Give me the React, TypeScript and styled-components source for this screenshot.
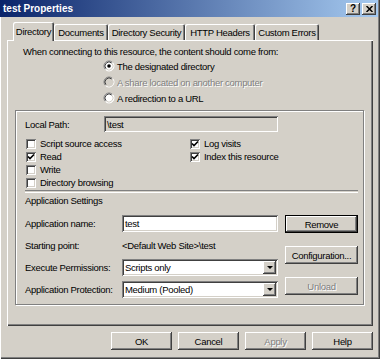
import { Fragment } from "react";
import styled, { createGlobalStyle } from "styled-components";

const GlobalStyle = createGlobalStyle`
  html, body {
    margin: 0;
    padding: 0;
    background: #d4d0c8;
  }
  body {
    font-family: "Liberation Sans", Arial, sans-serif;
    font-size: 9.5px;
    letter-spacing: -0.3px;
    color: #000;
  }
`;

const raised = `
  box-shadow: inset -1px -1px #404040, inset 1px 1px #ffffff,
    inset -2px -2px #808080, inset 2px 2px #d4d0c8;
`;

const sunken = `
  box-shadow: inset 1px 1px #808080, inset -1px -1px #ffffff,
    inset 2px 2px #404040, inset -2px -2px #d4d0c8;
`;

const Window = styled.div`
  width: 380px;
  height: 359px;
  box-sizing: border-box;
  background: #d4d0c8;
  display: flex;
  flex-direction: column;
  overflow: hidden;
  box-shadow: inset 1px 0 #ffffff, inset -1px -1px #404040, inset -2px -2px #808080;
`;

const TitleBar = styled.div`
  height: 17px;
  margin-right: 2px;
  padding: 0 2px 0 3px;
  background: linear-gradient(to right, #0a246a, #a6caf0);
  display: flex;
  align-items: center;
  justify-content: space-between;
`;

const Title = styled.span`
  color: #fff;
  font-weight: bold;
  font-size: 10px;
  letter-spacing: 0;
`;

const CaptionButtons = styled.div`
  display: flex;
  gap: 2px;
`;

const CaptionButton = styled.div`
  width: 14px;
  height: 12px;
  background: #d4d0c8;
  ${raised}
  display: flex;
  align-items: center;
  justify-content: center;
  font-weight: bold;
  font-size: 10px;
  letter-spacing: 0;
  line-height: 12px;
`;

const Body = styled.div`
  flex: 1;
  display: flex;
  flex-direction: column;
  padding: 5px 7px 0 7px;
`;

const TabStrip = styled.div`
  display: flex;
  align-items: flex-end;
  height: 18px;
  padding-left: 6px;
  position: relative;
  z-index: 1;
`;

const Tab = styled.div<{ $w: number; $active?: boolean }>`
  width: ${(p) => p.$w}px;
  height: ${(p) => (p.$active ? 19 : 16)}px;
  margin-bottom: ${(p) => (p.$active ? -1 : 0)}px;
  box-sizing: border-box;
  background: #d4d0c8;
  border-radius: 2px 2px 0 0;
  box-shadow: inset 1px 1px #ffffff, inset -1px 0 #404040, inset -2px 0 #808080;
  display: flex;
  align-items: center;
  justify-content: center;
  padding-top: ${(p) => (p.$active ? 0 : 1)}px;
  white-space: nowrap;
`;

const Panel = styled.div`
  height: 286px;
  box-sizing: border-box;
  padding: 6px 8px 0 8px;
  display: flex;
  flex-direction: column;
  box-shadow: inset 1px 1px #ffffff, inset -1px -1px #404040, inset -2px -2px #808080;
`;

const Intro = styled.div`
  margin-left: 8px;
  line-height: 12px;
  height: 12px;
  white-space: nowrap;
`;

const RadioList = styled.div`
  margin-left: 88px;
  display: flex;
  flex-direction: column;
`;

const RadioRow = styled.div<{ $disabled?: boolean }>`
  height: 16px;
  display: flex;
  align-items: center;
  gap: 2px;
  color: ${(p) => (p.$disabled ? "#808080" : "#000")};
  text-shadow: ${(p) => (p.$disabled ? "1px 1px #ffffff" : "none")};
`;

const GroupBox = styled.div`
  margin-top: 4px;
  width: 349px;
  box-sizing: border-box;
  border: 1px solid #808080;
  box-shadow: inset 1px 1px #ffffff, 1px 1px #ffffff;
  padding: 5px 5px 6px 9px;
  display: flex;
  flex-direction: column;
`;

const PathRow = styled.div`
  display: flex;
  align-items: center;
  height: 16px;
`;

const Label = styled.span<{ $w: number }>`
  width: ${(p) => p.$w}px;
  flex-shrink: 0;
  white-space: nowrap;
`;

const Field = styled.div<{ $w: number; $h: number; $disabled?: boolean }>`
  width: ${(p) => p.$w}px;
  height: ${(p) => p.$h}px;
  box-sizing: border-box;
  background: ${(p) => (p.$disabled ? "#d4d0c8" : "#ffffff")};
  ${sunken}
  display: flex;
  align-items: center;
  padding: 0 2px 0 3px;
  white-space: nowrap;
`;

const FieldText = styled.span`
  flex: 1;
`;

const ComboArrow = styled.div`
  width: 13px;
  height: 13px;
  background: #d4d0c8;
  ${raised}
  display: flex;
  align-items: center;
  justify-content: center;

  &::after {
    content: "";
    border-left: 3px solid transparent;
    border-right: 3px solid transparent;
    border-top: 3px solid #000;
    margin-top: 1px;
  }
`;

const CheckGrid = styled.div`
  margin-top: 5px;
  margin-left: 1px;
  display: grid;
  grid-template-columns: 164px 1fr;
  grid-auto-rows: 13px;
`;

const CheckItem = styled.div`
  display: flex;
  align-items: center;
  gap: 4px;
  white-space: nowrap;
`;

const CheckBox = styled.span`
  width: 10px;
  height: 10px;
  box-sizing: border-box;
  background: #ffffff;
  ${sunken}
  display: flex;
  align-items: center;
  justify-content: center;
`;

const Separator = styled.div`
  margin-top: 1px;
  height: 1px;
  border-top: 1px solid #808080;
  border-bottom: 1px solid #ffffff;
`;

const SectionTitle = styled.div`
  margin-top: 2px;
  line-height: 12px;
  height: 12px;
`;

const Lower = styled.div`
  margin-top: 7px;
  display: flex;
`;

const SettingsGrid = styled.div`
  display: grid;
  grid-template-columns: 97px 156px;
  grid-auto-rows: 18px;
  row-gap: 4px;
  align-items: center;
`;

const SideButtons = styled.div`
  margin-left: 7px;
  margin-top: 1px;
  display: flex;
  flex-direction: column;
  gap: 13px;
`;

const Button = styled.div<{ $w: number; $disabled?: boolean; $default?: boolean }>`
  width: ${(p) => p.$w}px;
  height: 18px;
  box-sizing: border-box;
  background: #d4d0c8;
  ${(p) =>
    p.$default
      ? `box-shadow: inset 0 0 0 1px #000000, inset -2px -2px #404040, inset 2px 2px #ffffff,
          inset -3px -3px #808080, inset 3px 3px #d4d0c8;`
      : raised}
  display: flex;
  align-items: center;
  justify-content: center;
  color: ${(p) => (p.$disabled ? "#808080" : "#000")};
  text-shadow: ${(p) => (p.$disabled ? "1px 1px #ffffff" : "none")};
  white-space: nowrap;
`;

const Footer = styled.div`
  margin-top: 6px;
  display: flex;
  justify-content: flex-end;
  gap: 6px;
`;

function Radio({ checked, disabled }: { checked?: boolean; disabled?: boolean }) {
  return (
    <svg width="12" height="12" viewBox="0 0 12 12">
      <circle cx="6" cy="6" r="5" fill={disabled ? "#d4d0c8" : "#ffffff"} />
      <path d="M2.46 9.54 A5 5 0 0 1 9.54 2.46" stroke="#808080" fill="none" />
      <path d="M9.54 2.46 A5 5 0 0 1 2.46 9.54" stroke="#ffffff" fill="none" />
      <path d="M3.17 8.83 A4 4 0 0 1 8.83 3.17" stroke="#404040" fill="none" />
      <path d="M8.83 3.17 A4 4 0 0 1 3.17 8.83" stroke="#d4d0c8" fill="none" />
      {checked && <circle cx="6" cy="6" r="1.8" fill="#000" />}
    </svg>
  );
}

function Check({ checked, label }: { checked?: boolean; label: string }) {
  return (
    <CheckItem>
      <CheckBox>
        {checked && (
          <svg width="8" height="8" viewBox="0 0 8 8">
            <polyline points="1,3.5 3,5.6 7,1.5" stroke="#000" strokeWidth="1.6" fill="none" />
          </svg>
        )}
      </CheckBox>
      {label}
    </CheckItem>
  );
}

function Combo({ value }: { value: string }) {
  return (
    <Field $w={156} $h={17}>
      <FieldText>{value}</FieldText>
      <ComboArrow />
    </Field>
  );
}

export default function App() {
  return (
    <Fragment>
      <GlobalStyle />
      <Window>
        <TitleBar>
          <Title>test Properties</Title>
          <CaptionButtons>
            <CaptionButton>?</CaptionButton>
            <CaptionButton>
              <svg width="7" height="6" viewBox="0 0 7 6">
                <path d="M0.5 0 L6.5 6 M6.5 0 L0.5 6" stroke="#000" strokeWidth="1.5" />
              </svg>
            </CaptionButton>
          </CaptionButtons>
        </TitleBar>
        <Body>
          <TabStrip>
            <Tab $w={41} $active>Directory</Tab>
            <Tab $w={54}>Documents</Tab>
            <Tab $w={77}>Directory Security</Tab>
            <Tab $w={70}>HTTP Headers</Tab>
            <Tab $w={64}>Custom Errors</Tab>
          </TabStrip>
          <Panel>
            <Intro>When connecting to this resource, the content should come from:</Intro>
            <RadioList>
              <RadioRow>
                <Radio checked />
                The designated directory
              </RadioRow>
              <RadioRow $disabled>
                <Radio disabled />
                A share located on another computer
              </RadioRow>
              <RadioRow>
                <Radio />
                A redirection to a URL
              </RadioRow>
            </RadioList>
            <GroupBox>
              <PathRow>
                <Label $w={79}>Local Path:</Label>
                <Field $w={174} $h={16} $disabled>
                  {"\\test"}
                </Field>
              </PathRow>
              <CheckGrid>
                <Check label="Script source access" />
                <Check checked label="Log visits" />
                <Check checked label="Read" />
                <Check checked label="Index this resource" />
                <Check label="Write" />
                <span />
                <Check label="Directory browsing" />
              </CheckGrid>
              <Separator />
              <SectionTitle>Application Settings</SectionTitle>
              <Lower>
                <SettingsGrid>
                  <Label $w={97}>Application name:</Label>
                  <Field $w={156} $h={17}>
                    test
                  </Field>
                  <Label $w={97}>Starting point:</Label>
                  <span>{"<Default Web Site>\\test"}</span>
                  <Label $w={97}>Execute Permissions:</Label>
                  <Combo value="Scripts only" />
                  <Label $w={97}>Application Protection:</Label>
                  <Combo value="Medium (Pooled)" />
                </SettingsGrid>
                <SideButtons>
                  <Button $w={73} $default>
                    Remove
                  </Button>
                  <Button $w={73}>Configuration...</Button>
                  <Button $w={73} $disabled>
                    Unload
                  </Button>
                </SideButtons>
              </Lower>
            </GroupBox>
          </Panel>
          <Footer>
            <Button $w={61}>OK</Button>
            <Button $w={61}>Cancel</Button>
            <Button $w={61} $disabled>
              Apply
            </Button>
            <Button $w={61}>Help</Button>
          </Footer>
        </Body>
      </Window>
    </Fragment>
  );
}
